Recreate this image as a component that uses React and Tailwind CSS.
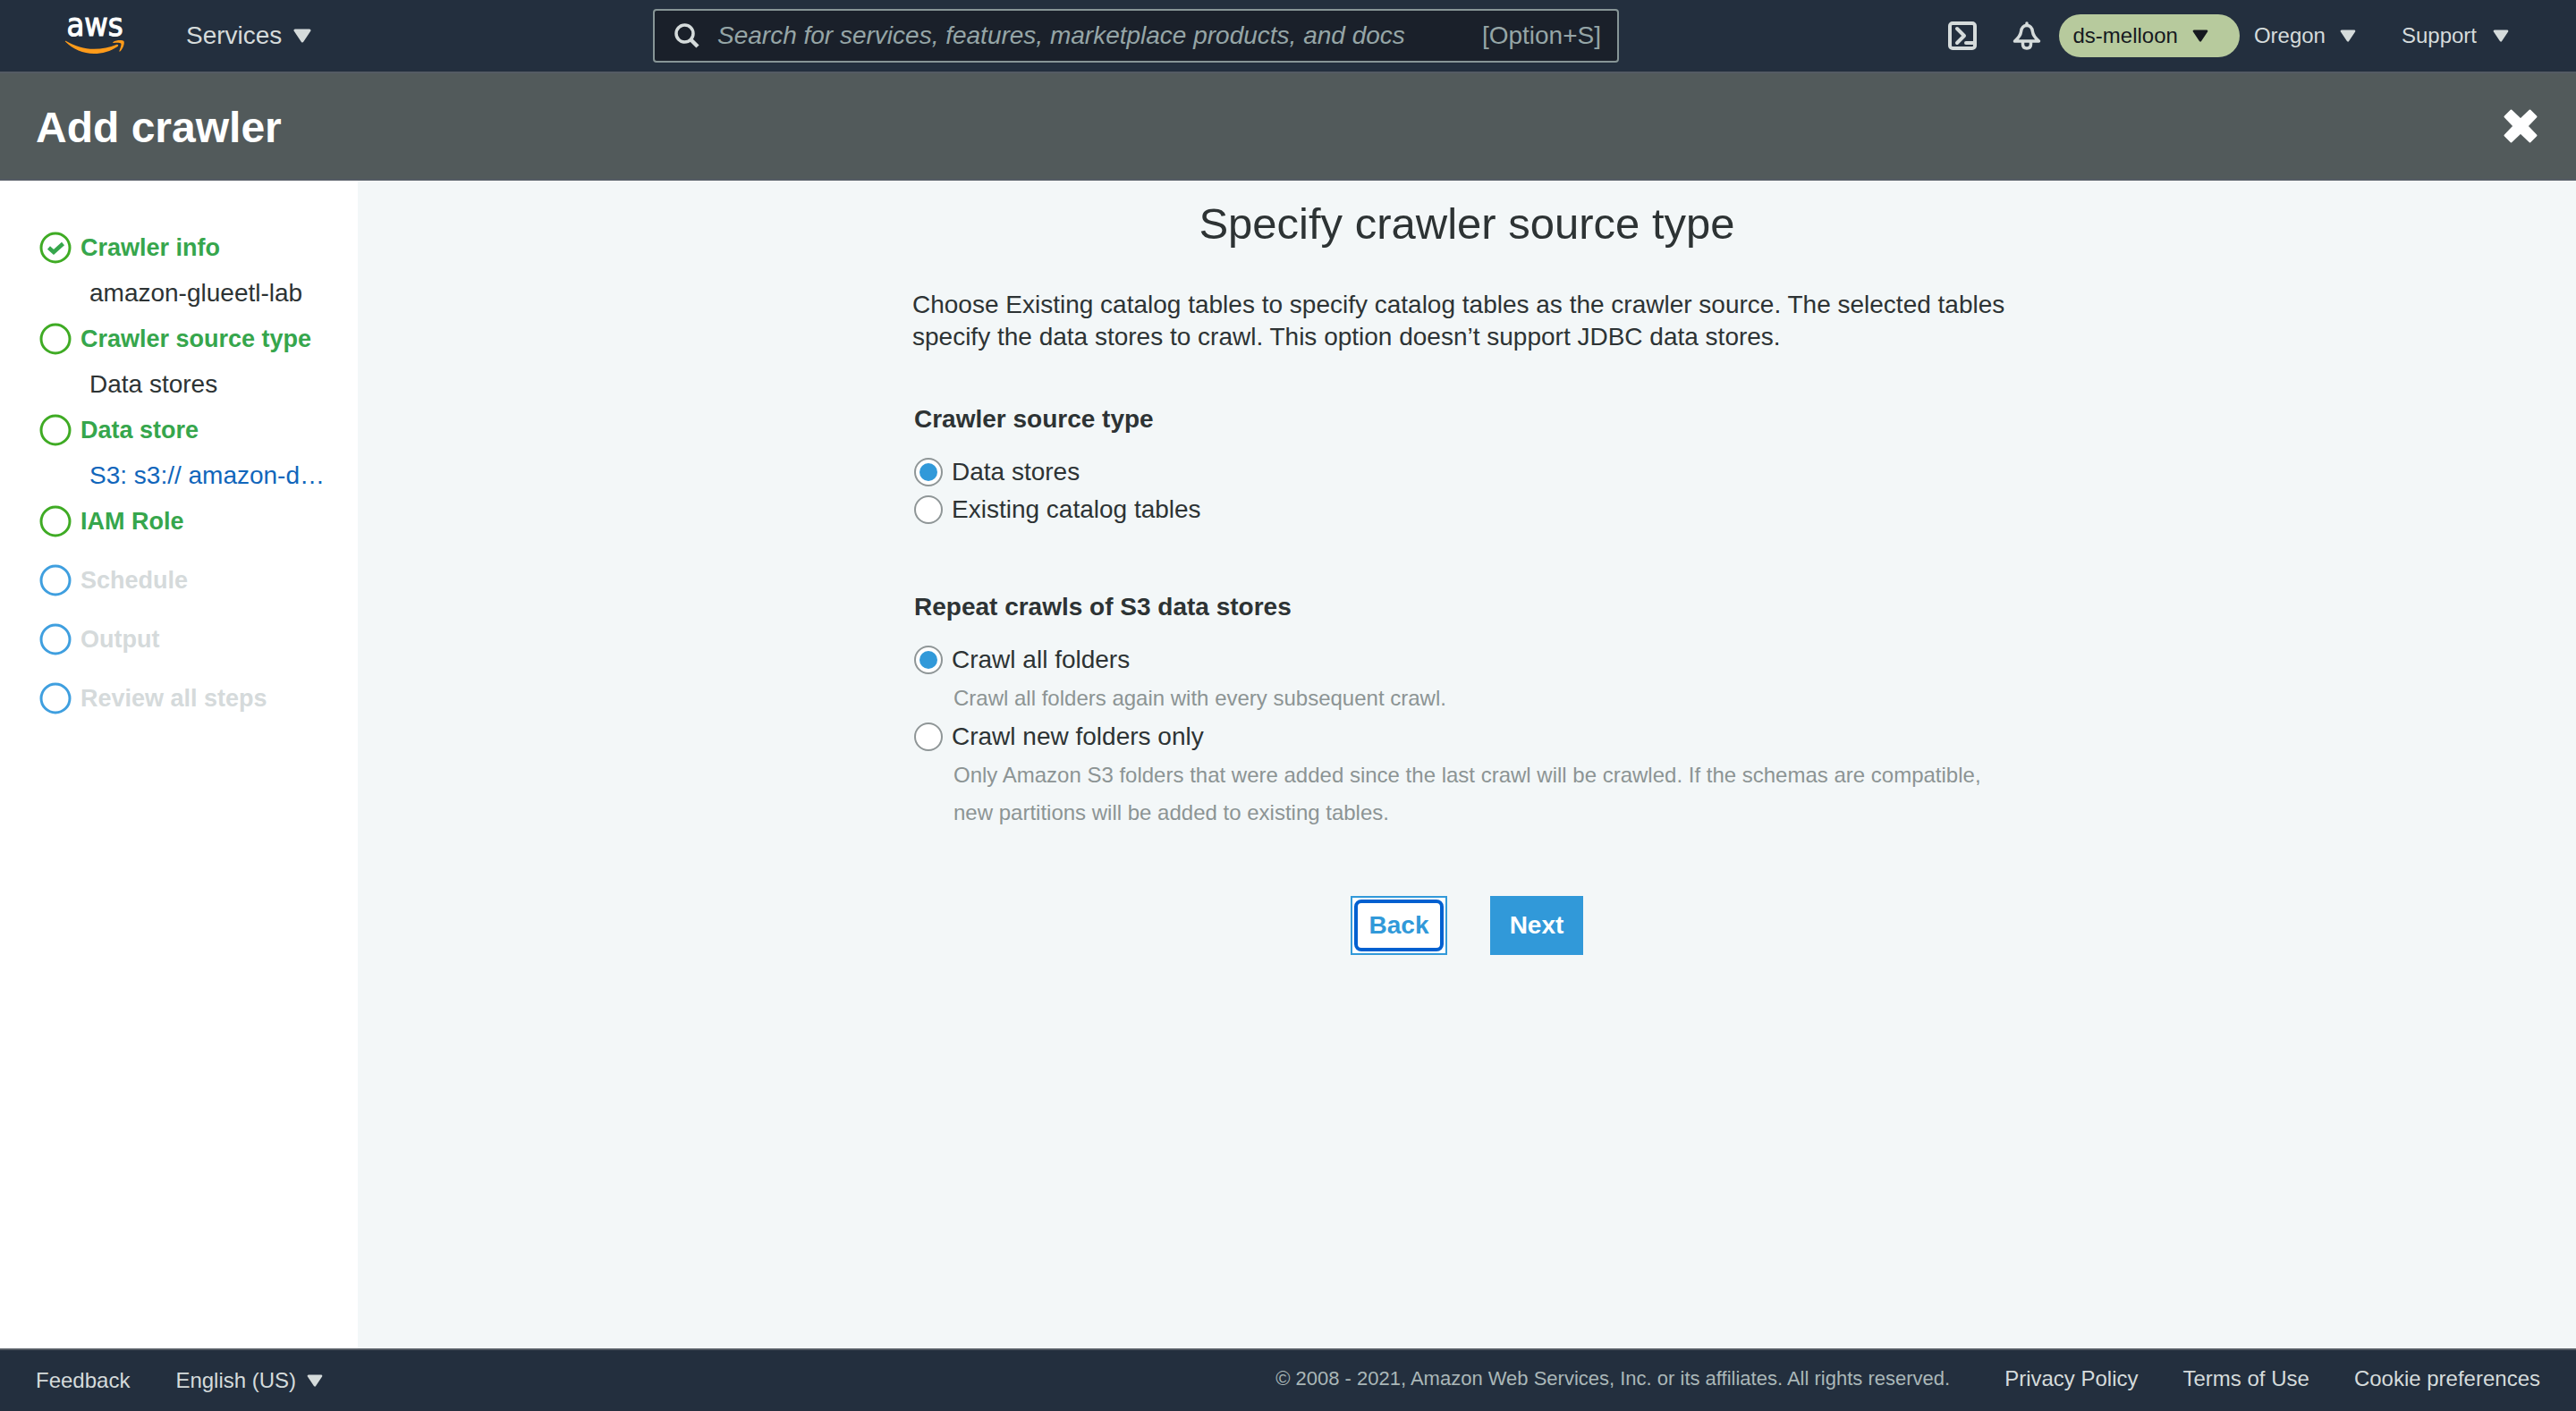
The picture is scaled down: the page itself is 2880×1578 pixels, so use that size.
import { useState } from "react";

function Caret({ className }) {
  return (
    <svg viewBox="0 0 20 16" className={className} aria-hidden="true">
      <path d="M2 2H18L10 14Z" fill="currentColor" stroke="currentColor" strokeWidth="3" strokeLinejoin="round" />
    </svg>
  );
}

function AwsLogo() {
  return (
    <svg viewBox="0 -16 68 76" className="h-[76px] w-[68px]" aria-hidden="true">
      <text x="34" y="22" textAnchor="middle" fill="#fff" stroke="#fff" strokeWidth="1" fontSize="36" fontFamily="'DejaVu Sans Condensed', 'Open Sans', sans-serif">
        aws
      </text>
      <path d="M1 28.5C0.500 28 1 27.300 2 27.900C12 33.500 22 36.800 33 36.800C42 36.800 51 35 58 32C60 31.200 61 32.800 59.500 33.900C52 39.200 42 42 33 42C21 42 9.500 37 1 28.500Z" fill="#ff9b1a" />
      <path d="M54.500 29C58 26.500 65 26.500 66.400 28C67.600 29.600 66 36 62.500 39.300C61.700 40 61 39.500 61.500 38.700C62.800 35.700 64 31.700 63.200 30.600C62.200 29.500 58 29.700 55.200 30C54.200 30.100 53.800 29.600 54.500 29Z" fill="#ff9b1a" />
    </svg>
  );
}

function SearchIcon() {
  return (
    <svg viewBox="0 0 28 28" className="size-7 shrink-0 text-[#d5dbdb]" fill="none" stroke="currentColor" aria-hidden="true">
      <circle cx="11.500" cy="11.500" r="9.500" strokeWidth="3.500" />
      <path d="M18.500 18.500L26 26" strokeWidth="4.500" />
    </svg>
  );
}

function TerminalIcon() {
  return (
    <svg viewBox="0 0 32 32" className="size-8" fill="none" stroke="currentColor" strokeWidth="4" strokeLinecap="round" strokeLinejoin="round" aria-hidden="true">
      <rect x="2" y="2" width="28" height="28" rx="3" />
      <path d="M10 8L18 16L10 24" />
      <path d="M20 24H28" />
    </svg>
  );
}

function BellIcon() {
  return (
    <svg viewBox="0 0 32 32" className="size-8" fill="none" stroke="currentColor" strokeWidth="3.500" strokeLinecap="round" strokeLinejoin="round" aria-hidden="true">
      <path d="M16 2V4" />
      <path d="M16 4.500C11.500 4.500 10 8 9.500 11.500C9 16 6 19 2.500 22H29.500C26 19 23 16 22.500 11.500C22 8 20.500 4.500 16 4.500Z" />
      <path d="M11.500 22.500V25.500C11.500 28.500 13.500 30 16 30C18.500 30 20.500 28.500 20.500 25.500V22.500" />
    </svg>
  );
}

function CloseIcon() {
  return (
    <svg viewBox="0 0 38 38" className="size-[38px]" aria-hidden="true">
      <path
        d="M8.500 1.500L19 11.500L29.500 1.500L36.500 8.500L26.500 19L36.500 29.500L29.500 36.500L19 26.500L8.500 36.500L1.500 29.500L11.500 19L1.500 8.500Z"
        fill="currentColor"
        stroke="currentColor"
        strokeWidth="2"
        strokeLinejoin="round"
      />
    </svg>
  );
}

const steps = [
  { title: "Crawler info", state: "done", detail: "amazon-glueetl-lab" },
  { title: "Crawler source type", state: "open", detail: "Data stores" },
  { title: "Data store", state: "open", detail: "S3: s3:// amazon-d…", link: true },
  { title: "IAM Role", state: "open" },
  { title: "Schedule", state: "todo" },
  { title: "Output", state: "todo" },
  { title: "Review all steps", state: "todo" },
];

function Step({ step }) {
  const todo = step.state === "todo";
  return (
    <li>
      <div className="flex h-9 items-center gap-[10px]">
        <svg viewBox="0 0 36 36" className="size-9 shrink-0" fill="none" aria-hidden="true">
          <circle cx="18" cy="18" r="16" stroke={todo ? "#3f9fdf" : "#3fab24"} strokeWidth="3" />
          {step.state === "done" && <path d="M10.500 18L16 23L26.500 13.500" stroke="#36a64c" strokeWidth="4.500" />}
        </svg>
        <span className={todo ? "text-[27px] font-bold text-[#d5dadb]" : "text-[27px] font-bold text-[#36a64c]"}>{step.title}</span>
      </div>
      {step.detail ? (
        <div className="flex h-[66px] items-center pl-14 text-[28px]">
          {step.link ? (
            <a href="#data-store" className="text-[#1166bb]">{step.detail}</a>
          ) : (
            <span>{step.detail}</span>
          )}
        </div>
      ) : (
        <div className="h-[30px]" />
      )}
    </li>
  );
}

function Option({ name, value, selected, onSelect, label, help }) {
  return (
    <div>
      <label className="flex h-[42px] items-center gap-[10px]">
        <input
          type="radio"
          name={name}
          checked={selected === value}
          onChange={() => onSelect(value)}
          className="size-8 shrink-0 appearance-none rounded-full border-2 border-[#8f9697] bg-white p-1 before:block before:size-full before:rounded-full checked:before:bg-[#3199d9]"
        />
        <span>{label}</span>
      </label>
      {help && <p className="pl-11 pt-px text-[24px] leading-[42px] text-[#8c9494]">{help}</p>}
    </div>
  );
}

export default function App() {
  const [source, setSource] = useState("stores");
  const [repeat, setRepeat] = useState("all");

  return (
    <div className="flex min-h-screen flex-col bg-[#f3f7f8] font-['Liberation_Sans',Arial,sans-serif] text-[28px] leading-9 text-[#2d3334]">
      <header className="grid h-20 grid-cols-[1fr_1080px_1fr] items-center bg-[#232f3e] text-[#d5dbdb]">
        <div className="flex items-center pl-[72px]">
          <a href="#home" aria-label="AWS home"><AwsLogo /></a>
          <button className="ml-[68px] flex items-center gap-[13px]">
            Services <Caret className="h-4 w-5" />
          </button>
        </div>
        <div className="-ml-[170px] mr-[170px] flex h-[60px] items-center rounded border-2 border-[#879596] bg-[#1a202a] pl-[22px] pr-[18px]">
          <SearchIcon />
          <input
            type="search"
            aria-label="Search"
            placeholder="Search for services, features, marketplace products, and docs"
            className="ml-5 min-w-0 flex-1 bg-transparent italic outline-none placeholder:text-[#95a5a6]"
          />
          <span className="text-[#95a5a6]">[Option+S]</span>
        </div>
        <div className="flex items-center justify-end pr-[75px] text-[24px]">
          <button aria-label="CloudShell"><TerminalIcon /></button>
          <button aria-label="Notifications" className="ml-10"><BellIcon /></button>
          <button className="ml-5 flex h-12 items-center gap-4 rounded-full bg-[#b7ca9d] pl-[15px] pr-[35px] text-[#16191f]">
            ds-melloon <Caret className="h-[14px] w-[18px]" />
          </button>
          <button className="ml-4 flex items-center gap-4">
            Oregon <Caret className="h-[14px] w-[18px]" />
          </button>
          <button className="ml-[51px] flex items-center gap-[18px]">
            Support <Caret className="h-[14px] w-[18px]" />
          </button>
        </div>
      </header>

      <div className="flex h-[122px] items-center justify-between border-y-2 border-[#545b64] bg-[#525a5b] pl-10 pr-[43px] text-white">
        <h1 className="pt-1 text-[48px] font-bold leading-[56px]">Add crawler</h1>
        <button aria-label="Close"><CloseIcon /></button>
      </div>

      <div className="flex flex-1">
        <nav aria-label="Steps" className="w-[400px] shrink-0 bg-white pl-11 pt-[57px]">
          <ol>
            {steps.map((step) => (
              <Step key={step.title} step={step} />
            ))}
          </ol>
        </nav>

        <main className="flex-1 pt-5">
          <form className="mx-auto max-w-[1240px]" onSubmit={(e) => e.preventDefault()}>
            <h2 className="text-center text-[49px] leading-[56px]">Specify crawler source type</h2>
            <p className="mt-[45px]">
              Choose Existing catalog tables to specify catalog tables as the crawler source. The selected tables
              specify the data stores to crawl. This option doesn’t support JDBC data stores.
            </p>

            <fieldset className="mt-14 pl-[2px]">
              <legend className="mb-5 font-bold">Crawler source type</legend>
              <Option name="source" value="stores" selected={source} onSelect={setSource} label="Data stores" />
              <Option name="source" value="tables" selected={source} onSelect={setSource} label="Existing catalog tables" />
            </fieldset>

            <fieldset className="mt-[70px] pl-[2px]">
              <legend className="mb-5 font-bold">Repeat crawls of S3 data stores</legend>
              <div className="flex flex-col gap-px">
                <Option name="repeat" value="all" selected={repeat} onSelect={setRepeat} label="Crawl all folders" help="Crawl all folders again with every subsequent crawl." />
                <Option
                  name="repeat"
                  value="new"
                  selected={repeat}
                  onSelect={setRepeat}
                  label="Crawl new folders only"
                  help="Only Amazon S3 folders that were added since the last crawl will be crawled. If the schemas are compatible, new partitions will be added to existing tables."
                />
              </div>
            </fieldset>

            <div className="mt-[72px] flex justify-center gap-12 font-bold">
              <button type="button" className="h-[66px] w-[108px] border-2 border-[#3199d9] bg-white p-[2px] text-[#3199d9]">
                <span className="flex h-full items-center justify-center rounded-lg border-4 border-[#0060d0]">Back</span>
              </button>
              <button type="submit" className="h-[66px] w-[104px] bg-[#3199d9] text-white">Next</button>
            </div>
          </form>
        </main>
      </div>

      <footer className="flex h-[70px] items-center justify-between border-t-2 border-[#545b64] bg-[#232f3e] px-10 text-[24px] text-[#d5dbdb]">
        <div className="flex items-center gap-[51px]">
          <a href="#feedback">Feedback</a>
          <button className="flex items-center gap-3">
            English (US) <Caret className="h-[14px] w-[18px]" />
          </button>
        </div>
        <div className="flex items-center gap-[50px] pb-1">
          <span className="mr-[11px] text-[22px] text-[#aab7b8]">© 2008 - 2021, Amazon Web Services, Inc. or its affiliates. All rights reserved.</span>
          <a href="#privacy">Privacy Policy</a>
          <a href="#terms">Terms of Use</a>
          <a href="#cookies">Cookie preferences</a>
        </div>
      </footer>
    </div>
  );
}
